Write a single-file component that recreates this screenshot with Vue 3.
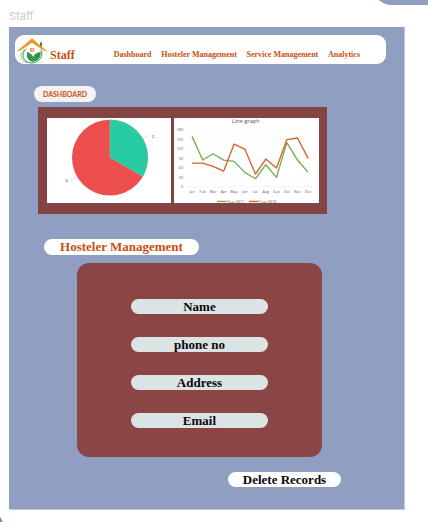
<script setup>
import { ref } from 'vue'

const links = ['Dashboard', 'Hosteler Management', 'Service Management', 'Analytics']
const fields = [
  { id: 'name', label: 'Name' },
  { id: 'phone', label: 'phone no' },
  { id: 'address', label: 'Address' },
  { id: 'email', label: 'Email' }
]
const form = ref({ name: '', phone: '', address: '', email: '' })

const months = ['Jan', 'Feb', 'Mar', 'Apr', 'May', 'Jun', 'Jul', 'Aug', 'Sep', 'Oct', 'Nov', 'Dec']
const ticks = [180, 150, 120, 90, 60, 30, 0]
const year2017 = [159, 84, 104, 84, 80, 45, 25, 69, 30, 139, 84, 45]
const year2018 = [75, 75, 64, 50, 135, 119, 40, 87, 59, 148, 154, 89]

const px = (i) => Math.round(54 + i * 31.6)
const py = (v) => Math.round(206 - v * 0.95)
const line = (values) => values.map((v, i) => `${px(i)},${py(v)}`).join(' ')
</script>

<template>
  <div class="page">
    <span class="blob blob-top"></span>
    <span class="blob blob-bottom"></span>
    <h1 class="frame-name">Staff</h1>
    <main class="frame">
      <header class="topbar">
        <svg class="logo" viewBox="0 0 96 84" aria-hidden="true">
          <path d="M72 19h6v18l-6-5z" fill="#2f9345" />
          <path d="M24 42C8 54 14 76 34 80" fill="none" stroke="#3ba257" stroke-width="2" />
          <path d="M30 39C14 54 20 79 46 81C62 81 74 72 77 58C78 50 77 46 74 41" fill="none" stroke="#2e9b4b" stroke-width="3" />
          <path d="M48 7L1 47L14 43L48 20L82 43L95 47Z" fill="#ed9820" />
          <path d="M42 36h6v5h-6zm7 0h6v5h-6zm-7 6h6v5h-6zm7 0h6v5h-6z" fill="#dca053" />
          <path d="M48 77C34 72 31 62 33 48C43 51 49 56 51 63C55 54 63 49 74 48C75 66 65 77 48 77Z" fill="#2a9348" />
          <path d="M39 56Q46 63 49 73Q54 63 64 57" fill="none" stroke="#8fcb98" stroke-width="1" />
          <path d="M69 76h15M64 80h25" stroke="#b8d5bb" stroke-width="1" />
        </svg>
        <strong class="brand">Staff</strong>
        <nav class="nav">
          <a v-for="link in links" :key="link" href="#">{{ link }}</a>
        </nav>
      </header>

      <h2 class="tag tag-dashboard">DASHBOARD</h2>
      <section class="charts">
        <svg class="chart" viewBox="0 0 373 255" role="img" aria-label="Pie chart">
          <circle cx="189" cy="119" r="114" fill="#ec4e4e" />
          <path d="M189 119V5A114 114 0 0 1 288 176Z" fill="#27cca3" stroke="#b9c7a5" stroke-width="1" />
          <path d="M288 62L298 56L309 52" class="lead lead-green" />
          <path d="M90 176L80 182L70 185" class="lead lead-red" />
          <text x="315" y="61" class="pie-label">2</text>
          <text x="55" y="193" class="pie-label">4</text>
        </svg>
        <svg class="chart" viewBox="0 0 435 255" role="img" aria-label="Line graph">
          <text x="215" y="14" class="title">Line graph</text>
          <g v-for="t in ticks" :key="t">
            <line x1="38" x2="417" :y1="py(t)" :y2="py(t)" :class="t ? 'grid' : 'axis'" />
            <text x="27" :y="py(t) + 4" class="tick">{{ t }}</text>
          </g>
          <text v-for="(m, i) in months" :key="m" :x="px(i)" y="226" class="month">{{ m }}</text>
          <polyline :points="line(year2017)" class="series green" />
          <polyline :points="line(year2018)" class="series orange" />
          <line x1="129" x2="157" y1="250" y2="250" class="series green" />
          <text x="159" y="254" class="legend">Year 2017</text>
          <line x1="225" x2="253" y1="250" y2="250" class="series orange" />
          <text x="255" y="254" class="legend">Year 2018</text>
        </svg>
      </section>

      <h2 class="tag tag-hosteler">Hosteler Management</h2>
      <form class="card" @submit.prevent>
        <input
          v-for="f in fields"
          :key="f.id"
          v-model="form[f.id]"
          type="text"
          :name="f.id"
          :aria-label="f.label"
          :placeholder="f.label"
        />
      </form>
      <button type="button" class="delete">Delete Records</button>
    </main>
  </div>
</template>

<style>
body {
  margin: 0;
  background: #fff;
}
</style>

<style scoped>
.page {
  position: relative;
  overflow: hidden;
  padding: 8px 23px 12px 9px;
  font-family: "Liberation Serif", serif;
}
.blob {
  position: absolute;
  background: #909ec2;
}
.blob-top {
  top: -35px;
  right: -40px;
  width: 96px;
  height: 40px;
  border-radius: 20px;
}
.blob-bottom {
  bottom: -32px;
  left: -37px;
  width: 40px;
  height: 40px;
  border-radius: 10px;
  background: #7f90bd;
}
.frame-name {
  margin: 0;
  height: 19px;
  font: 400 11px/16px Inter, sans-serif;
  color: #cacaca;
}
.frame {
  box-sizing: border-box;
  display: flex;
  flex-direction: column;
  align-items: flex-start;
  padding: 8px 18px 22px 6px;
  background: #909ec2;
  border-right: 1px solid #bcc5dd;
  border-bottom: 1px solid #bcc5dd;
}
.topbar {
  box-sizing: border-box;
  display: flex;
  align-items: center;
  width: 100%;
  height: 29px;
  padding: 0 26px 0 1px;
  border-radius: 9px;
  background: #fff;
}
.logo {
  flex: none;
  width: 32px;
  height: 28px;
}
.brand {
  padding: 10px 0 0 2px;
  font-size: 12px;
  line-height: 16px;
  color: #c8500f;
}
.nav {
  flex: 1;
  display: flex;
  justify-content: space-between;
  padding: 10px 0 0 39px;
}
.nav a {
  font-size: 8px;
  line-height: 12px;
  font-weight: 700;
  white-space: nowrap;
  color: #c8500f;
  text-decoration: none;
}
.tag {
  margin: 0;
  border-radius: 8px;
  line-height: 16px;
  text-align: center;
  color: #c8500f;
  background: #fff;
}
.tag-dashboard {
  width: 62px;
  margin: 22px 0 5px 19px;
  font-family: Lato, sans-serif;
  font-size: 7px;
  background: #f3f3f3;
}
.charts {
  box-sizing: border-box;
  display: grid;
  grid-template-columns: 124fr 145fr;
  gap: 3px;
  width: 78%;
  margin-left: 23px;
  padding: 11px 8px 11px 9px;
  background: #844444;
}
.chart {
  display: block;
  width: 100%;
  background: #fff;
}
.chart text {
  font-family: "Open Sans", sans-serif;
  font-size: 11px;
  fill: #555;
}
.chart .pie-label {
  font-size: 13px;
  fill: #333;
}
.lead {
  fill: none;
  stroke-width: 1;
}
.lead-green {
  stroke: #55d6b6;
}
.lead-red {
  stroke: #f28080;
}
.chart .title {
  font-size: 17px;
  text-anchor: middle;
}
.chart .tick {
  text-anchor: end;
}
.chart .month {
  text-anchor: middle;
}
.grid {
  stroke: #eee;
}
.axis {
  stroke: #ddd;
}
.series {
  fill: none;
  stroke-width: 4;
  stroke-linejoin: round;
}
.green {
  stroke: #75b04c;
}
.orange {
  stroke: #d2622c;
}
.tag-hosteler {
  width: 155px;
  margin: 25px 0 8px 29px;
  font-size: 13px;
}
.card {
  box-sizing: border-box;
  display: flex;
  flex-direction: column;
  align-items: center;
  gap: 23px;
  width: 66%;
  margin-left: 62px;
  padding: 36px 0 29px;
  border-radius: 12px;
  background: #8b4545;
}
.card input {
  box-sizing: border-box;
  width: 56%;
  height: 15px;
  margin: 0;
  padding: 0;
  border: 0;
  border-radius: 8px;
  background: #dce3e4;
  font: 700 13px/15px "Liberation Serif", serif;
  text-align: center;
  color: #080808;
}
.card input::placeholder {
  color: #080808;
  opacity: 1;
}
.delete {
  align-self: flex-end;
  width: 113px;
  height: 15px;
  margin: 15px 45px 0 0;
  padding: 0;
  border: 0;
  border-radius: 8px;
  background: #fff;
  font: 700 13px/15px "Liberation Serif", serif;
  color: #080808;
}
</style>
